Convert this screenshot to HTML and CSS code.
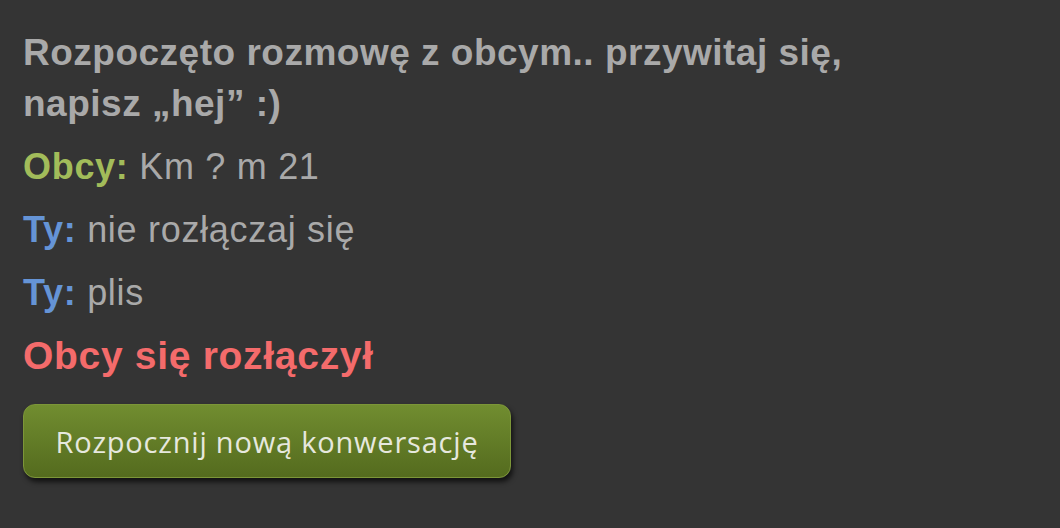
FILE: index.html
```html
<!DOCTYPE html>
<html lang="pl">
<head>
    <meta charset="UTF-8">
    <meta name="viewport" content="width=device-width, initial-scale=1.0">
    <title>Rozmowa</title>
    <link rel="stylesheet" href="styles.css">
</head>
<body>
    <div class="chat">
        <p class="info">Rozpoczęto rozmowę z obcym.. przywitaj się,<br>napisz „hej” :)</p>
        <p class="msg"><span class="stranger">Obcy:</span> Km ? m 21</p>
        <p class="msg"><span class="you">Ty:</span> nie rozłączaj się</p>
        <p class="msg"><span class="you">Ty:</span> plis</p>
        <p class="ended">Obcy się rozłączył</p>
        <button class="new-chat">Rozpocznij nową konwersację</button>
    </div>
</body>
</html>
```

FILE: styles.css
```css
html, body {
    margin: 0;
    height: 100%;
}
body {
    background-color: #343434;
    font-family: "Liberation Sans", Arial, sans-serif;
    font-size: 36px;
    letter-spacing: 0.7px;
    color: #a9a9a9;
}
.chat {
    padding: 27px 23px;
}
.chat p {
    margin: 0 0 12px 0;
    line-height: 51px;
}
.info {
    font-size: 37px;
    letter-spacing: 0.5px;
    font-weight: bold;
}
.stranger {
    color: #a2bc5a;
    font-weight: bold;
}
.you {
    color: #6594d6;
    font-weight: bold;
}
.ended {
    color: #f46b6b;
    font-size: 39px;
    letter-spacing: 0.7px;
    font-weight: bold;
}
.new-chat {
    margin-top: 11px;
    width: 488px;
    height: 74px;
    font-family: "Open Sans", sans-serif;
    font-size: 29px;
    letter-spacing: 0.8px;
    color: #e6e8de;
    background: linear-gradient(to bottom, #718d30, #546b1e);
    border: 1px solid #7c9638;
    border-radius: 12px;
    box-shadow: 2px 4px 5px rgba(0,0,0,0.65);
    cursor: pointer;
}
```
